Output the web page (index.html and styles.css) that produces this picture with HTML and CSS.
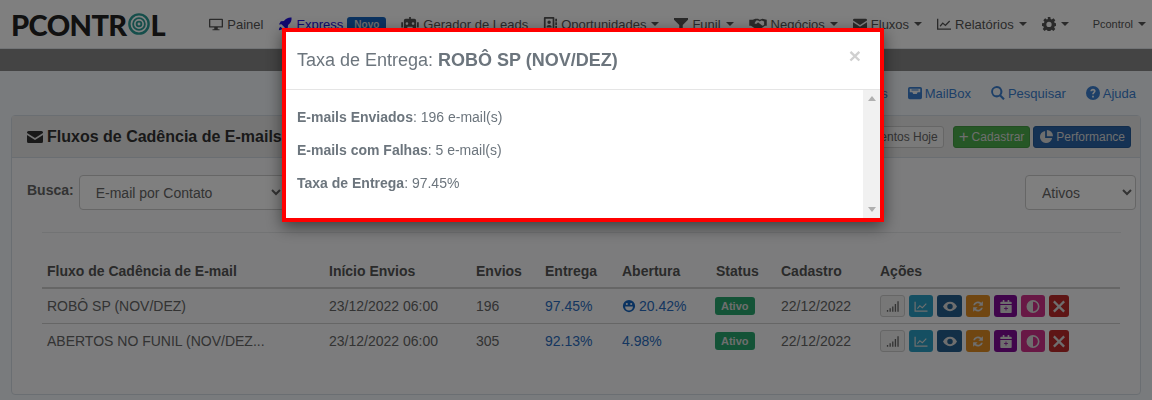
FILE: index.html
```html
<!DOCTYPE html>
<html lang="pt-BR">
  <head>
    <meta charset="UTF-8" />
    <title>Fluxos de Cadência de E-mails</title>
    <link rel="stylesheet" href="styles.css">
  </head>
  <body>
    <header class="topbar">
      <div class="logo">
        <span class="logo-p">P</span>CONTR<svg class="logo-o" viewBox="0 0 24 24"><g fill="none" stroke="#2a9d96"><circle cx="12" cy="12" r="10.5" stroke-width="2.6"/><circle cx="12" cy="12" r="6.4" stroke-width="2"/><circle cx="12" cy="12" r="2.6" stroke-width="2"/></g></svg>L
      </div>
      <nav class="nav">
        <a class="nav-item"><svg class="ico" viewBox="0 0 16 16"><path d="M1 2h14a1 1 0 0 1 1 1v8a1 1 0 0 1-1 1h-5v2h2v1H4v-1h2v-2H1a1 1 0 0 1-1-1V3a1 1 0 0 1 1-1zm.5 1.5v7h13v-7z"/></svg>Painel</a>
        <a class="nav-item nav-express"><svg class="ico" viewBox="0 0 16 16"><path d="M15.500 .5c.3 3.800-1 6.600-4 8.700l-.4 3.600L7.500 15l.2-3L4 8.300l-3 .2 2.200-3.600 3.600-.4C8.900 1.500 11.700.2 15.500.5zM3 11c-1.200.6-2 2-2 4 2 0 3.400-.8 4-2z"/></svg>Express<span class="badge-new">Novo</span></a>
        <a class="nav-item"><svg class="ico ico-wide" viewBox="0 0 20 16"><path d="M9 0h2v2h4a2 2 0 0 1 2 2v10a2 2 0 0 1-2 2H5a2 2 0 0 1-2-2V4a2 2 0 0 1 2-2h4zM6.500 6a1.500 1.500 0 1 0 0 3 1.500 1.500 0 0 0 0-3zm7 0a1.500 1.500 0 1 0 0 3 1.500 1.500 0 0 0 0-3zM7 11v2h6v-2zM0 6h2v6H0zm18 0h2v6h-2z"/></svg>Gerador de Leads</a>
        <a class="nav-item"><svg class="ico" viewBox="0 0 16 16"><path d="M2 0h10a1 1 0 0 1 1 1v14a1 1 0 0 1-1 1H2a1 1 0 0 1-1-1V1a1 1 0 0 1 1-1zm1 2v12h8V2zm4 2a2 2 0 1 1 0 4 2 2 0 0 1 0-4zM4 12c0-2 1-3 3-3s3 1 3 3zM14 2h2v3h-2zm0 4h2v3h-2zm0 4h2v3h-2z"/></svg>Oportunidades<i class="caret"></i></a>
        <a class="nav-item"><svg class="ico" viewBox="0 0 16 16"><path d="M0 1h16v2l-6 6v6l-4-2V9L0 3z"/></svg>Funil<i class="caret"></i></a>
        <a class="nav-item"><svg class="ico ico-wide" viewBox="0 0 20 16"><path d="M0 3h4l3-1h3l2 1 3-1 5 1v7h-2l-6 4-2 1-5-3-3-2H0zm8 1L6 7c1 1 2 1 3 0l1-1 5 4 2-1V5l-3-1-2 1-2-1z"/></svg>Negócios<i class="caret"></i></a>
        <a class="nav-item"><svg class="ico" viewBox="0 0 16 16"><path d="M0 3.500A1.500 1.500 0 0 1 1.500 2h13A1.500 1.500 0 0 1 16 3.500V4L8 9 0 4zM0 6l8 5 8-5v6.500a1.500 1.500 0 0 1-1.500 1.500h-13A1.500 1.500 0 0 1 0 12.500z"/></svg>Fluxos<i class="caret"></i></a>
        <a class="nav-item"><svg class="ico" viewBox="0 0 16 16"><path d="M0 2h1.500v11H16v1.500H0zm3 8 3.500-4 3 2.500L14 4l1 1-5.300 5.500-3-2.500L4 11z"/></svg>Relatórios<i class="caret"></i></a>
        <a class="nav-item nav-gear"><svg class="ico" viewBox="0 0 16 16"><path d="M6.500 0h3l.4 2.200 1.300.6L13.100 1.500l2.100 2.100-1.300 1.900.6 1.300 2.200.4v3l-2.200.4-.6 1.300 1.300 1.900-2.100 2.100-1.900-1.300-1.300.6-.4 2.200h-3l-.4-2.200-1.300-.6-1.900 1.300L.8 13.800l1.300-1.900-.6-1.300L0 10.200v-3l2.200-.4.6-1.300L1.500 3.600l2.100-2.100 1.900 1.300 1.300-.6zM8 5.500a3 3 0 1 0 0 6 3 3 0 0 0 0-6z"/></svg><i class="caret"></i></a>
        <a class="nav-item nav-user">Pcontrol<i class="caret"></i></a>
      </nav>
    </header>
    <div class="darkbar"></div>

    <main class="page">
      <div class="shortcuts">
        <a>Campanhas</a>
        <a><svg class="ico" viewBox="0 0 16 16"><path d="M2 1h12a2 2 0 0 1 2 2v10a2 2 0 0 1-2 2H2a2 2 0 0 1-2-2V3a2 2 0 0 1 2-2zm0 2v4h3l1 2h4l1-2h3V3zm2 1h8v1H4z"/></svg>MailBox</a>
        <a><svg class="ico" viewBox="0 0 16 16"><path d="M6.500 0a6.500 6.500 0 0 1 5.200 10.400l4 4-1.700 1.700-4-4A6.500 6.500 0 1 1 6.500 0zm0 2.300a4.200 4.200 0 1 0 0 8.400 4.200 4.200 0 0 0 0-8.400z"/></svg>Pesquisar</a>
        <a><svg class="ico" viewBox="0 0 16 16"><path fill-rule="evenodd" d="M8 0a8 8 0 1 1 0 16A8 8 0 0 1 8 0zM7 11v2h2v-2zm1-8C6 3 5 4 5 6h2c0-.7.300-1 1-1s1 .300 1 .9c0 1.100-2 1.300-2 3.600h2c0-1.700 2-2 2-3.900C11 4.200 10 3 8 3z"/></svg>Ajuda</a>
      </div>

      <section class="panel">
        <div class="panel-head">
          <h2 class="panel-title"><svg class="ico" viewBox="0 0 16 16"><path d="M0 3.500A1.500 1.500 0 0 1 1.500 2h13A1.500 1.500 0 0 1 16 3.500V4L8 9 0 4zM0 6l8 5 8-5v6.500a1.500 1.500 0 0 1-1.500 1.500h-13A1.500 1.500 0 0 1 0 12.500z"/></svg>Fluxos de Cadência de E-mails</h2>
          <div class="head-actions">
            <a class="btn btn-light">Agendamentos Hoje</a>
            <a class="btn btn-green"><span class="plus">+</span>Cadastrar</a>
            <a class="btn btn-navy"><svg class="ico" viewBox="0 0 16 16"><path d="M7 1v8h8a7 7 0 1 1-8-8zm2-1a7 7 0 0 1 7 7H9z"/></svg>Performance</a>
          </div>
        </div>
        <div class="panel-body">
          <div class="filters">
            <label class="filter-label">Busca:</label>
            <select class="field field-search"><option>E-mail por Contato</option></select>
            <select class="field field-status"><option>Ativos</option></select>
          </div>
          <hr class="divider">
          <table class="flows">
            <colgroup>
              <col class="c-name"><col class="c-start"><col class="c-sent"><col class="c-deliv"><col class="c-open"><col class="c-status"><col class="c-date"><col>
            </colgroup>
            <thead>
              <tr><th>Fluxo de Cadência de E-mail</th><th>Início Envios</th><th>Envios</th><th>Entrega</th><th>Abertura</th><th>Status</th><th>Cadastro</th><th>Ações</th></tr>
            </thead>
            <tbody>
              <tr>
                <td>ROBÔ SP (NOV/DEZ)</td><td>23/12/2022 06:00</td><td>196</td><td class="link">97.45%</td>
                <td class="link"><svg class="ico ico-smile" viewBox="0 0 16 16"><path fill-rule="evenodd" d="M8 1a7 7 0 1 1 0 14A7 7 0 0 1 8 1zM3.500 8.500c0 3 2 4.500 4.500 4.500s4.500-1.500 4.500-4.500zM5.500 4.500a1.200 1.200 0 1 0 0 2.400 1.200 1.200 0 0 0 0-2.400zm5 0a1.200 1.200 0 1 0 0 2.400 1.200 1.200 0 0 0 0-2.400z"/></svg>20.42%</td>
                <td><span class="badge-status">Ativo</span></td><td>22/12/2022</td>
                <td>
                  <div class="actions">
                    <a class="act act-gray"><svg viewBox="0 0 16 12"><path d="M1 10h1.500v2H1zm3-2h1.500v4H4zm3-2h1.500v6H7zm3-3h1.500v9H10zm3-3h1.500v12H13z"/></svg></a>
                    <a class="act act-teal"><svg viewBox="0 0 16 16"><path d="M0 2h1.500v11H16v1.500H0zm3 8 3.500-4 3 2.500L14 4l1 1-5.300 5.500-3-2.500L4 11z"/></svg></a>
                    <a class="act act-navy"><svg viewBox="0 0 18 14"><path fill-rule="evenodd" d="M9 1c4 0 7 2.500 9 6-2 3.500-5 6-9 6S2 10.500 0 7c2-3.500 5-6 9-6zm0 2.500a3.500 3.500 0 1 0 0 7 3.500 3.500 0 0 0 0-7z"/></svg></a>
                    <a class="act act-orange"><svg viewBox="0 0 16 16"><path d="M2 6.500a6 6 0 0 1 10-3L14 1.500V7H8.500l2-2a4 4 0 0 0-6.300 1.500zM14 9.500a6 6 0 0 1-10 3L2 14.500V9h5.500l-2 2a4 4 0 0 0 6.300-1.500z"/></svg></a>
                    <a class="act act-purple"><svg viewBox="0 0 14 16"><path fill-rule="evenodd" d="M3 0h2v2h4V0h2v2h2a1 1 0 0 1 1 1v2H0V3a1 1 0 0 1 1-1h2zM0 6h14v9a1 1 0 0 1-1 1H1a1 1 0 0 1-1-1zm6.500 2v2h-2v1h2v2h1v-2h2v-1h-2V8z"/></svg></a>
                    <a class="act act-pink"><svg viewBox="0 0 16 16"><path fill-rule="evenodd" d="M8 0a8 8 0 1 1 0 16A8 8 0 0 1 8 0zm0 2v12a6 6 0 1 0 0-12z"/></svg></a>
                    <a class="act act-red"><svg viewBox="0 0 12 12"><path d="M2 .5 6 4.500 10 .5 11.500 2 7.500 6l4 4-1.500 1.500-4-4-4 4L.5 10l4-4-4-4z"/></svg></a>
                  </div>
                </td>
              </tr>
              <tr>
                <td>ABERTOS NO FUNIL (NOV/DEZ...</td><td>23/12/2022 06:00</td><td>305</td><td class="link">92.13%</td><td class="link">4.98%</td>
                <td><span class="badge-status">Ativo</span></td><td>22/12/2022</td>
                <td>
                  <div class="actions">
                    <a class="act act-gray"><svg viewBox="0 0 16 12"><path d="M1 10h1.500v2H1zm3-2h1.500v4H4zm3-2h1.500v6H7zm3-3h1.500v9H10zm3-3h1.500v12H13z"/></svg></a>
                    <a class="act act-teal"><svg viewBox="0 0 16 16"><path d="M0 2h1.500v11H16v1.500H0zm3 8 3.500-4 3 2.500L14 4l1 1-5.300 5.500-3-2.500L4 11z"/></svg></a>
                    <a class="act act-navy"><svg viewBox="0 0 18 14"><path fill-rule="evenodd" d="M9 1c4 0 7 2.500 9 6-2 3.500-5 6-9 6S2 10.500 0 7c2-3.500 5-6 9-6zm0 2.500a3.500 3.500 0 1 0 0 7 3.500 3.500 0 0 0 0-7z"/></svg></a>
                    <a class="act act-orange"><svg viewBox="0 0 16 16"><path d="M2 6.500a6 6 0 0 1 10-3L14 1.500V7H8.500l2-2a4 4 0 0 0-6.300 1.500zM14 9.500a6 6 0 0 1-10 3L2 14.500V9h5.500l-2 2a4 4 0 0 0 6.300-1.500z"/></svg></a>
                    <a class="act act-purple"><svg viewBox="0 0 14 16"><path fill-rule="evenodd" d="M3 0h2v2h4V0h2v2h2a1 1 0 0 1 1 1v2H0V3a1 1 0 0 1 1-1h2zM0 6h14v9a1 1 0 0 1-1 1H1a1 1 0 0 1-1-1zm6.500 2v2h-2v1h2v2h1v-2h2v-1h-2V8z"/></svg></a>
                    <a class="act act-pink"><svg viewBox="0 0 16 16"><path fill-rule="evenodd" d="M8 0a8 8 0 1 1 0 16A8 8 0 0 1 8 0zm0 2v12a6 6 0 1 0 0-12z"/></svg></a>
                    <a class="act act-red"><svg viewBox="0 0 12 12"><path d="M2 .5 6 4.500 10 .5 11.500 2 7.500 6l4 4-1.500 1.500-4-4-4 4L.5 10l4-4-4-4z"/></svg></a>
                  </div>
                </td>
              </tr>
            </tbody>
          </table>
        </div>
      </section>
    </main>

    <div class="backdrop"></div>
    <div class="modal">
      <div class="modal-head">
        <h4 class="modal-title">Taxa de Entrega: <b>ROBÔ SP (NOV/DEZ)</b></h4>
        <span class="modal-close">×</span>
      </div>
      <div class="modal-main">
        <div class="modal-body">
          <p><b>E-mails Enviados</b>: 196 e-mail(s)</p>
          <p><b>E-mails com Falhas</b>: 5 e-mail(s)</p>
          <p><b>Taxa de Entrega</b>: 97.45%</p>
        </div>
        <div class="scroll">
          <i class="arrow-up"></i>
          <i class="arrow-down"></i>
        </div>
      </div>
    </div>
  </body>
</html>
```

FILE: styles.css
```css
html,
body {
  height: 400px;
  overflow: hidden;
}
body {
  margin: 0;
  background: #f3f7fb;
  font-family: "Liberation Sans", Arial, sans-serif;
  font-size: 14px;
  color: #666;
}
a {
  color: inherit;
  text-decoration: none;
}
.ico {
  width: 14px;
  height: 14px;
  fill: currentColor;
  flex: none;
}
.ico-wide {
  width: 18px;
}

/* top bar */
.topbar {
  height: 48px;
  background: #fff;
  display: flex;
  align-items: center;
  justify-content: space-between;
  padding: 0 6px 0 11px;
  border-bottom: 1px solid #e2e6ea;
}
.logo {
  display: flex;
  align-items: center;
  font-family: "Lato", "Liberation Sans", sans-serif;
  font-weight: 900;
  font-size: 29px;
  letter-spacing: -0.6px;
  color: #222;
  line-height: 1;
}
.logo-o {
  width: 22px;
  height: 22px;
  margin: 0 1px;
}
.nav {
  display: flex;
  align-items: center;
  gap: 15px;
  font-size: 13px;
  color: #555;
}
.nav-item {
  display: flex;
  align-items: center;
  gap: 4px;
  white-space: nowrap;
}
.nav-express {
  color: #2212e0;
}
.badge-new {
  background: #1565c0;
  color: #ddd;
  font-size: 10px;
  font-weight: bold;
  border-radius: 3px;
  padding: 2px 7px;
  margin-left: 0;
}
.caret {
  width: 0;
  height: 0;
  margin-left: 1px;
  border-left: 4px solid transparent;
  border-right: 4px solid transparent;
  border-top: 4px solid currentColor;
}
.nav-user {
  font-size: 11px;
  margin-left: 9px;
}
.darkbar {
  height: 22px;
  background: #888;
}

/* page */
.page {
  padding: 0 11px;
}
.shortcuts {
  height: 44px;
  display: flex;
  align-items: center;
  justify-content: flex-end;
  gap: 20px;
  padding-right: 5px;
  font-size: 13px;
  color: #3a7fd0;
}
.shortcuts a {
  display: flex;
  align-items: center;
  gap: 3px;
}
.panel {
  height: 280px;
  box-sizing: border-box;
  background: #f8f9fb;
  border: 1px solid #d5dde5;
  border-radius: 4px;
}
.panel-head {
  height: 42px;
  box-sizing: border-box;
  background: #eaeaea;
  border-bottom: 1px solid #d5dde5;
  display: flex;
  align-items: center;
  justify-content: space-between;
  padding: 0 9px 0 15px;
}
.panel-title {
  margin: 0;
  display: flex;
  align-items: center;
  gap: 4px;
  font-size: 16px;
  color: #333;
}
.panel-title .ico {
  width: 16px;
  height: 16px;
}
.head-actions {
  display: flex;
  align-items: center;
  gap: 3px;
}
.btn {
  height: 22px;
  box-sizing: border-box;
  display: flex;
  align-items: center;
  gap: 3px;
  padding: 0 5px;
  font-size: 12px;
  border-radius: 3px;
  border: 1px solid #ccc;
  white-space: nowrap;
}
.btn-light {
  background: #f4f4f4;
  color: #666;
  margin-right: 6px;
}
.btn-green {
  background: #4cae4c;
  border-color: #449d44;
  color: #ddd;
}
.plus {
  font-size: 17px;
  line-height: 1;
}
.btn-navy {
  background: #2a64a8;
  border-color: #245a98;
  color: #ddd;
}
.panel-body {
  padding: 17px 4px 0 15px;
}
.filters {
  display: flex;
  align-items: flex-start;
  gap: 5px;
}
.filter-label {
  font-weight: bold;
  font-size: 14px;
  line-height: 31px;
}
.field {
  height: 35px;
  box-sizing: border-box;
  padding: 0 12px;
  font: 14px "Liberation Sans", Arial, sans-serif;
  color: #666;
  background: #fff;
  border: 1px solid #ccc;
  border-radius: 4px;
}
.field-search {
  width: 206px;
}
.field-status {
  width: 111px;
  margin-left: auto;
}
.divider {
  margin: 22px 15px 0 15px;
  border: 0;
  border-top: 1px solid #e4e6e8;
}
.flows {
  margin: 22px 0 0 15px;
  width: 1078px;
  table-layout: fixed;
  border-collapse: collapse;
}
.c-name { width: 282px; }
.c-start { width: 147px; }
.c-sent { width: 69px; }
.c-deliv { width: 77px; }
.c-open { width: 94px; }
.c-status { width: 65px; }
.c-date { width: 99px; }
.flows th {
  height: 32px;
  padding: 0 5px;
  text-align: left;
  font-size: 14px;
  color: #555;
  border-bottom: 2px solid #ccc;
}
.flows td {
  height: 34px;
  padding: 0 5px;
  color: #666;
  border-bottom: 1px solid #ccc;
  white-space: nowrap;
}
.flows tbody tr:last-child td {
  border-bottom: 0;
}
.flows td.link {
  color: #2a6cc0;
}
.ico-smile {
  vertical-align: -2px;
  margin-right: 3px;
  color: #1565c0;
}
.badge-status {
  display: inline-block;
  background: #28a76f;
  color: #ddd;
  font-size: 11px;
  font-weight: bold;
  border-radius: 3px;
  padding: 3px 6px;
  margin-left: -1px;
}
.actions {
  display: flex;
  gap: 4px;
}
.act {
  width: 24px;
  height: 22px;
  box-sizing: border-box;
  display: flex;
  align-items: center;
  justify-content: center;
  border-radius: 3px;
  color: #ddd;
}
.act svg {
  width: 14px;
  height: 13px;
  fill: currentColor;
}
.act-gray { background: #eee; border: 1px solid #ccc; color: #666; width: 25px; }
.act-teal { background: #2a9fc4; }
.act-navy { background: #245e8e; width: 25px; }
.act-orange { background: #e08d22; }
.act-purple { background: #800a96; width: 23px; }
.act-pink { background: #d0308a; }
.act-red { background: #bd2a2a; width: 20px; }

/* modal */
.backdrop {
  position: fixed;
  inset: 0;
  background: rgba(0, 0, 0, 0.5);
}
.modal {
  position: fixed;
  left: 282px;
  top: 28px;
  width: 602px;
  height: 194px;
  box-sizing: border-box;
  background: #fff;
  border: 4px solid #ff0000;
  box-shadow: 0 5px 15px rgba(0, 0, 0, 0.5);
  color: #6c757d;
  display: flex;
  flex-direction: column;
}
.modal-head {
  height: 58px;
  box-sizing: border-box;
  flex: none;
  display: flex;
  align-items: center;
  justify-content: space-between;
  padding: 0 19px 0 11px;
  border-bottom: 1px solid #e5e5e5;
}
.modal-title {
  margin: 0;
  font-size: 18px;
  font-weight: normal;
}
.modal-close {
  font-size: 21px;
  font-weight: bold;
  color: #d0d0d0;
  line-height: 1;
  margin-top: -11px;
}
.modal-main {
  flex: 1;
  min-height: 0;
  display: flex;
}
.modal-body {
  flex: 1;
  padding: 19px 11px 0;
}
.modal-body p {
  margin: 0 0 17px;
  line-height: 16px;
}
.scroll {
  width: 17px;
  background: #f1f1f1;
  display: flex;
  flex-direction: column;
  justify-content: space-between;
  align-items: center;
  padding: 6px 0;
}
.arrow-up {
  border-left: 4px solid transparent;
  border-right: 4px solid transparent;
  border-bottom: 5px solid #b0b0b0;
}
.arrow-down {
  border-left: 4px solid transparent;
  border-right: 4px solid transparent;
  border-top: 5px solid #b0b0b0;
}
```
